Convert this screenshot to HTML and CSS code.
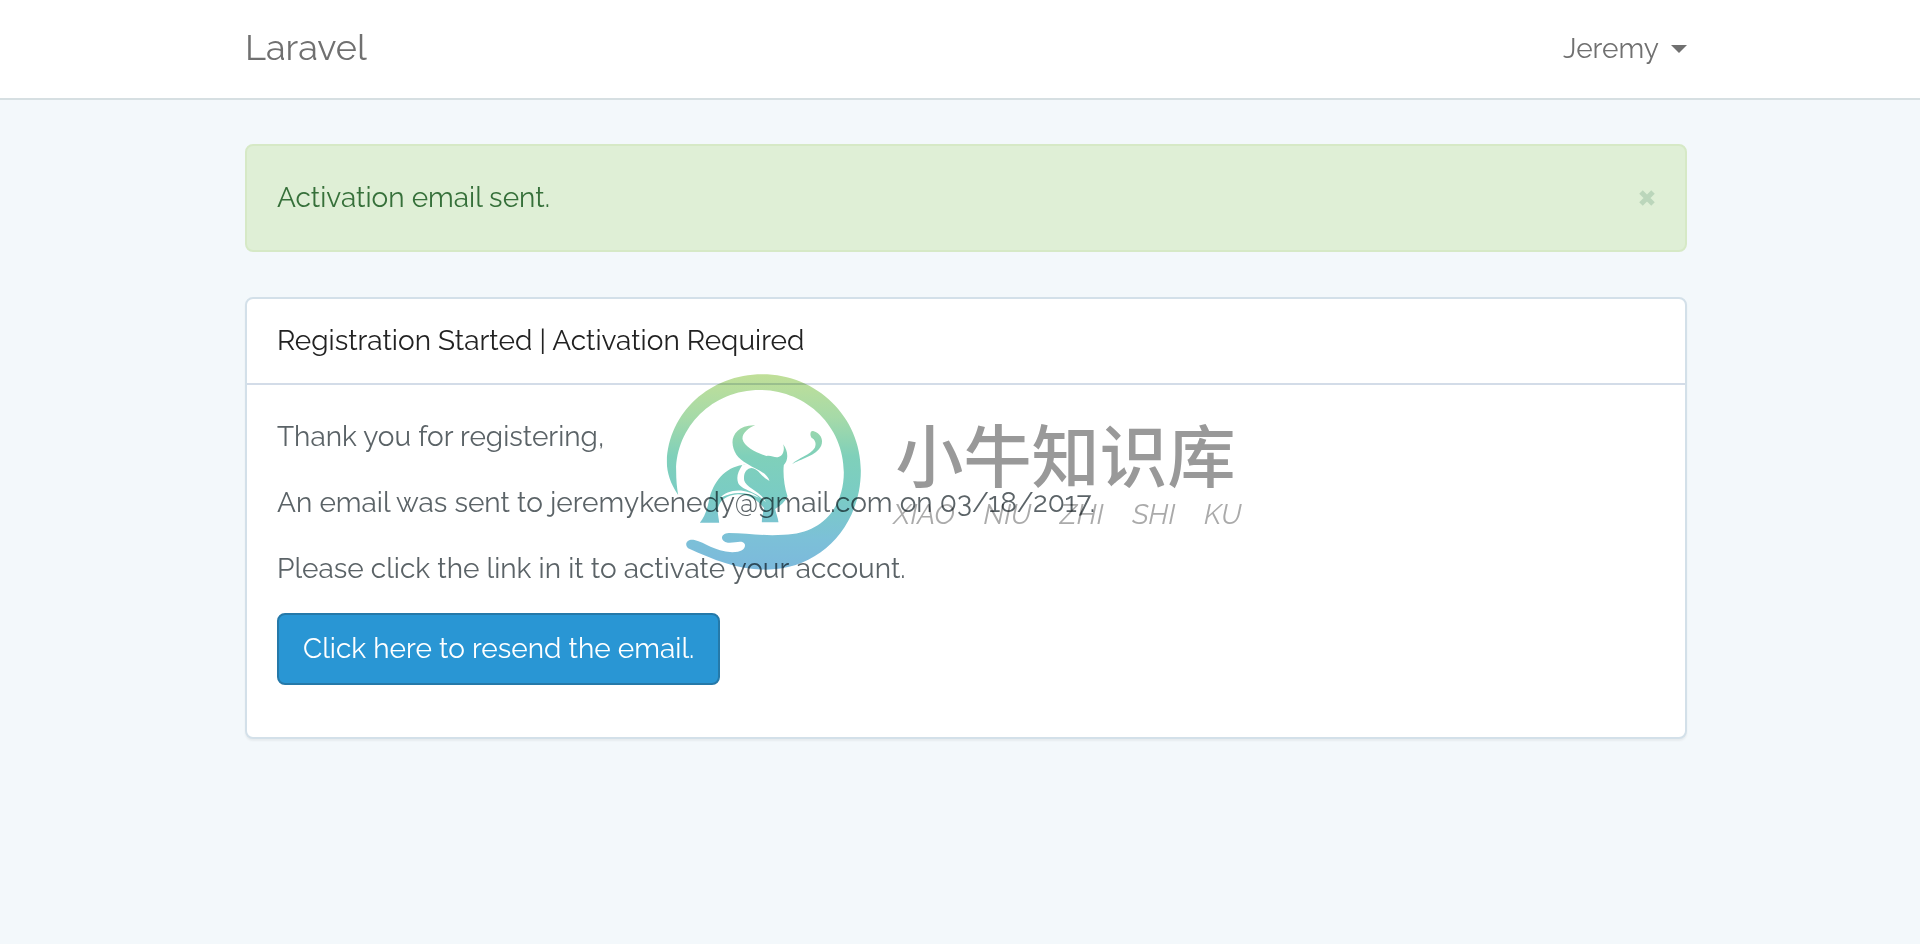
FILE: index.html
```html
<!DOCTYPE html>
<html lang="en">
<head>
<meta charset="utf-8">
<title>Laravel</title>
<link rel="stylesheet" href="styles.css">
</head>
<body>
<nav class="navbar">
  <div class="container navbar-inner">
    <a class="brand" href="#">Laravel</a>
    <button class="user-menu" type="button">Jeremy <span class="caret"></span></button>
  </div>
</nav>
<main class="container content">
  <div class="alert" role="alert">
    <span>Activation email sent.</span>
    <button class="close" type="button" aria-label="Close">
      <svg width="16" height="16" viewBox="0 0 16 16"><path d="M2 2 14 14M14 2 2 14" fill="none" stroke="currentColor" stroke-width="5"/></svg>
    </button>
  </div>
  <section class="panel">
    <h1 class="panel-heading">Registration Started | Activation Required</h1>
    <div class="panel-body">
      <p>Thank you for registering,</p>
      <p>An email was sent to jeremykenedy@gmail.com on 03/18/2017.</p>
      <p>Please click the link in it to activate your account.</p>
      <p><a class="btn" href="#">Click here to resend the email.</a></p>
    </div>
  </section>
</main>
<div class="watermark">
  <svg class="watermark-logo" viewBox="48 45 585 588" aria-hidden="true">
    <defs>
      <linearGradient id="tint" gradientUnits="userSpaceOnUse" x1="0" y1="46" x2="0" y2="632">
        <stop offset="0" stop-color="#c0df98"/>
        <stop offset="0.22" stop-color="#a6daa8"/>
        <stop offset="0.42" stop-color="#7fd0ba"/>
        <stop offset="0.62" stop-color="#7accc4"/>
        <stop offset="0.85" stop-color="#7cc0d8"/>
        <stop offset="1" stop-color="#7cb9dc"/>
      </linearGradient>
    </defs>
    <g fill="url(#tint)">
      <path d="M83 408C60 375 49 340 49 310C53 160 180 46 335 46C500 46 631 175 631 335C631 500 510 632 345 632C260 632 190 603 113 568C99 553 112 539 132 543C165 550 190 577 245 580C275 580 286 568 283 556C275 541 255 553 232 551C208 547 208 524 235 522C290 522 340 532 400 527C520 525 580 440 580 340C580 200 465 93 328 93C185 93 77 205 77 335C77 362 79 385 83 408Z"/>
      <path d="M314 199C268 197 246 225 246 250C247 278 262 300 290 314L276 318C225 325 187 367 175 427C170 452 162 474 148 491H206C205 475 199 460 203 445C210 422 230 408 262 406C296 406 322 424 341 448C337 462 334 474 334 490H384C382 474 376 462 374 450C392 440 404 428 411 412C401 382 397 342 400 318C415 302 413 276 398 256C404 275 396 292 384 294C372 297 360 287 348 291C318 282 280 262 276 240C275 222 294 207 314 199Z"/>
      <path d="M483 236C477 226 480 214 488 216C510 222 520 242 512 260C498 290 448 300 425 315C443 296 480 288 493 266C499 252 493 241 483 236Z"/>
    </g>
    <g fill="#fff">
      <path d="M276 317C262 338 257 354 263 372C273 394 318 396 346 430C334 399 285 386 281 364C278 342 288 328 304 327C325 330 330 352 357 366C350 340 318 332 290 314Z"/>
      <path d="M210 416C228 394 280 382 326 416C286 396 246 398 210 416Z"/>
    </g>
  </svg>
  <div class="watermark-text">
    <div class="watermark-title" lang="zh">小牛知识库</div>
    <div class="watermark-pinyin"><span>XIAO</span> <span>NIU</span> <span>ZHI</span> <span>SHI</span> <span>KU</span></div>
  </div>
</div>
</body>
</html>
```

FILE: styles.css
```css
* {
  box-sizing: border-box;
}

body {
  position: relative;
  min-height: 100vh;
  margin: 0;
  padding-left: 12px;
  background: #f3f8fb;
  color: #5b6367;
  font-family: Raleway, Lato, sans-serif;
  font-size: 28px;
  line-height: 44px;
}

.container {
  max-width: 1442px;
  margin: 0 auto;
}

.navbar {
  margin-left: -12px;
  padding-left: 12px;
  background: #fff;
  border-bottom: 2px solid #d6dfe2;
}

.navbar-inner {
  display: flex;
  align-items: center;
  justify-content: space-between;
  min-height: 98px;
}

.brand {
  padding-bottom: 4px;
  color: #707070;
  font-size: 36px;
  text-decoration: none;
}

.user-menu {
  display: flex;
  align-items: center;
  gap: 12px;
  padding: 0;
  border: 0;
  background: none;
  color: #707070;
  font: inherit;
}

.caret {
  border-top: 8px solid;
  border-right: 8px solid transparent;
  border-left: 8px solid transparent;
}

.content {
  padding-top: 44px;
}

.alert {
  display: flex;
  align-items: center;
  justify-content: space-between;
  margin-bottom: 45px;
  padding: 30px;
  border: 2px solid #d6e9c6;
  border-radius: 8px;
  background: #dfefd6;
  color: #36703a;
}

.close {
  display: flex;
  padding: 0;
  border: 0;
  background: none;
  color: #bbd6bb;
}

.panel {
  border: 2px solid #d3e0e9;
  border-radius: 8px;
  background: #fff;
  box-shadow: 0 2px 2px rgba(0, 0, 0, 0.05);
}

.panel-heading {
  margin: 0;
  padding: 20px 30px;
  border-bottom: 2px solid #d3dce8;
  color: #222;
  font-size: 28px;
  font-weight: 400;
}

.panel-body {
  padding: 30px;
}

.panel-body p {
  margin: 0 0 22px;
}

.btn {
  display: inline-block;
  padding: 12px 24px;
  border: 2px solid #2579a9;
  border-radius: 8px;
  background: #2996d4;
  color: #fff;
  text-decoration: none;
  vertical-align: top;
}

.watermark {
  position: absolute;
  top: 50%;
  left: 50%;
  display: flex;
  align-items: center;
  gap: 28px;
  padding-right: 12px;
  transform: translate(-50%, -50%);
  mix-blend-mode: multiply;
  pointer-events: none;
}

.watermark-logo {
  width: 195px;
  height: 196px;
}

.watermark-text {
  color: #999;
}

.watermark-title {
  padding: 0 6px;
  font-family: "Noto Sans CJK SC", sans-serif;
  font-size: 68px;
  font-weight: 500;
  line-height: 80px;
}

.watermark-pinyin {
  display: flex;
  justify-content: space-between;
  padding: 6px 0 0 4px;
  color: #aaa;
  font-size: 28px;
  font-style: italic;
  line-height: 32px;
}
```
